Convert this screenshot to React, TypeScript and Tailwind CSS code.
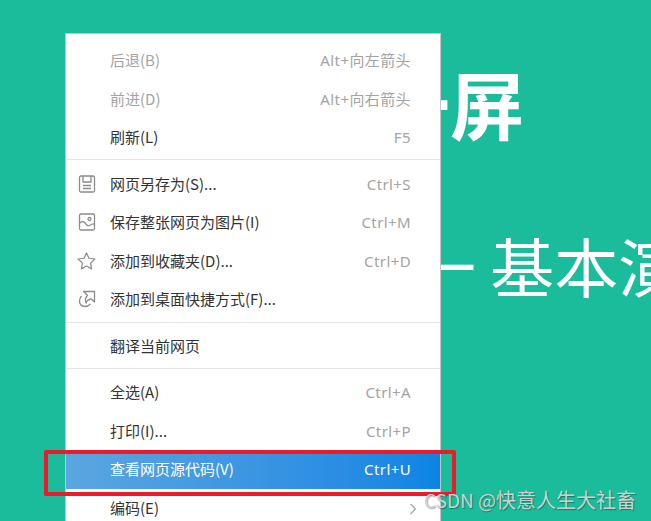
const font = { fontFamily: '"Noto Sans CJK SC", sans-serif' };

function SaveIcon() {
  return (
    <svg width="18" height="18" viewBox="0 0 18 18" fill="none" stroke="#8c8c8c" strokeWidth="1.3">
      <path d="M3 1h12a1.500 1.500 0 0 1 1.500 1.500v13a1.500 1.500 0 0 1-1.500 1.500H3a1.500 1.500 0 0 1-1.500-1.500v-13A1.500 1.500 0 0 1 3 1z" />
      <path d="M5 1v6h8V1M5 10.500h8M5 13.500h8" />
    </svg>
  );
}

function ImageIcon() {
  return (
    <svg width="18" height="18" viewBox="0 0 18 18" fill="none" stroke="#8c8c8c" strokeWidth="1.3">
      <rect x="1.500" y="1" width="15" height="16" rx="1.500" />
      <circle cx="11.500" cy="6" r="1.500" />
      <path d="M2 10c2-2 3.500-2 5 0s3 3.500 4.500 2.500 3-2 4.800-1.500" />
    </svg>
  );
}

function StarIcon() {
  return (
    <svg width="20" height="20" viewBox="0 0 20 20" fill="none" stroke="#8c8c8c" strokeWidth="1.3" strokeLinejoin="round">
      <path d="M10 1.500l2.600 5.600 6.200.8-4.500 4.300 1.100 6.100L10 15.300l-5.400 3 1.100-6.100-4.500-4.300 6.200-.8z" />
    </svg>
  );
}

function ShortcutIcon() {
  return (
    <svg width="18" height="18" viewBox="0 0 18 18" fill="none" stroke="#8c8c8c" strokeWidth="1.3" strokeLinejoin="round">
      <path d="M5.500 1.500H16.500V12L13 8.800C10.500 9.500 8.500 11 8 13C7 10.500 7.500 7.500 9.500 5.200Z" />
      <path d="M3.500 6C1.500 8.500 1 12 2.500 14.500C4.500 17 9 17.500 12.500 14" />
    </svg>
  );
}

function Row({
  label,
  shortcut,
  icon,
  disabled,
  arrow,
  active,
}: {
  label: string;
  shortcut?: string;
  icon?: React.ReactNode;
  disabled?: boolean;
  arrow?: boolean;
  active?: boolean;
}) {
  return (
    <div
      className={`flex h-[38.5px] items-center pl-[44px] pr-[29px] text-[15px] ${
        active
          ? "bg-gradient-to-r from-[#5aa6e0] to-[#0a84e4] text-white"
          : disabled
            ? "text-[#a3a3a3]"
            : "text-[#333333]"
      }`}
    >
      {icon && <span className="ml-[-33px] mr-[14px] flex w-[19px] justify-center">{icon}</span>}
      <span className="flex-1 whitespace-nowrap">{label}</span>
      {shortcut && (
        <span
          className={`whitespace-nowrap tracking-[0.4px] font-['Noto_Sans','Noto_Sans_CJK_SC',sans-serif] ${
            active ? "text-white" : "text-[#a3a3a3]"
          }`}
        >
          {shortcut}
        </span>
      )}
      {arrow && (
        <svg width="8" height="12" viewBox="0 0 8 12" fill="none" stroke="#a3a3a3" strokeWidth="1.2" className="mr-[-6px] mt-[2px]">
          <path d="M1.500 1l5 5-5 5" />
        </svg>
      )}
    </div>
  );
}

function Separator({ top, bottom }: { top: number; bottom: number }) {
  return (
    <div
      className="h-px bg-[#e5e5e5]"
      style={{ marginTop: top, marginBottom: bottom }}
    />
  );
}

export default function App() {
  return (
    <div className="relative h-[521px] w-[651px] overflow-hidden bg-[#1bbc9b]" style={font}>
      <div className="pl-[376px] pt-[52px]">
        <div className="whitespace-nowrap text-[74px] font-bold leading-[100px] text-white">一屏</div>
        <div className="mt-[67px] whitespace-nowrap pl-[36px] text-[64px] leading-[90px] text-white">一 基本演示</div>
      </div>

      <div className="absolute left-[65px] top-[33px] w-[376px] border border-[#c4c4c4] bg-white pt-[7px]">
        <Row label="后退(B)" shortcut="Alt+向左箭头" disabled />
        <Row label="前进(D)" shortcut="Alt+向右箭头" disabled />
        <Row label="刷新(L)" shortcut="F5" />
        <Separator top={2} bottom={5} />
        <Row label="网页另存为(S)..." shortcut="Ctrl+S" icon={<SaveIcon />} />
        <Row label="保存整张网页为图片(I)" shortcut="Ctrl+M" icon={<ImageIcon />} />
        <Row label="添加到收藏夹(D)..." shortcut="Ctrl+D" icon={<StarIcon />} />
        <Row label="添加到桌面快捷方式(F)..." icon={<ShortcutIcon />} />
        <Separator top={3} bottom={4} />
        <Row label="翻译当前网页" />
        <Separator top={3} bottom={4} />
        <Row label="全选(A)" shortcut="Ctrl+A" />
        <Row label="打印(I)..." shortcut="Ctrl+P" />
        <Row label="查看网页源代码(V)" shortcut="Ctrl+U" active />
        <Row label="编码(E)" arrow />
      </div>

      <div className="absolute left-[44px] top-[450px] h-[46px] w-[412px] rounded-[2px] border-[4px] border-[#ea1c2c]" />

      <div className="absolute left-[424px] top-[486px] whitespace-nowrap text-[20px] leading-[28px] text-[#d0d0d0] [text-shadow:1px_1px_1px_rgba(0,0,0,0.35)]">
        <span className="text-[19px]">CSDN @</span>快意人生大社畜
      </div>
    </div>
  );
}
